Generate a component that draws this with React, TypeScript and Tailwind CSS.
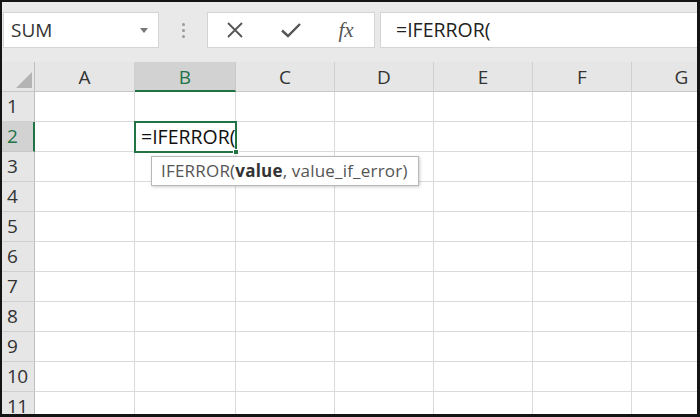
import React from "react";

const cols = [
  { l: "A", w: 100 },
  { l: "B", w: 101 },
  { l: "C", w: 99 },
  { l: "D", w: 99 },
  { l: "E", w: 99 },
  { l: "F", w: 99 },
  { l: "G", w: 100 },
];
const rows = [1, 2, 3, 4, 5, 6, 7, 8, 9, 10, 11];

export default function App() {
  return (
    <div
      className="w-[700px] h-[417px] bg-[#141414] pt-[2px] pl-[2px] pr-[3px] pb-[3px]"
      style={{ fontFamily: '"Open Sans", "Noto Sans", sans-serif' }}
    >
      <div className="relative h-full bg-white flex flex-col overflow-hidden">
        {/* toolbar */}
        <div className="h-[60px] shrink-0 bg-[#e9e9e9] flex items-start pt-[10px]">
          <div className="ml-[1px] w-[156px] h-[36px] shrink-0 bg-white border border-[#d4d4d4] flex items-center justify-between pl-[7px] pr-[10px]">
            <span className="text-[19px] text-[#333]">SUM</span>
            <svg width="8" height="5" viewBox="0 0 8 5">
              <path d="M0 0 L8 0 L4 5 Z" fill="#777" />
            </svg>
          </div>
          <div className="w-[48px] h-[36px] shrink-0 flex flex-col items-center justify-center gap-[3px]">
            <div className="w-[3px] h-[3px] rounded-full bg-[#9a9a9a]" />
            <div className="w-[3px] h-[3px] rounded-full bg-[#9a9a9a]" />
            <div className="w-[3px] h-[3px] rounded-full bg-[#9a9a9a]" />
          </div>
          <div className="w-[168px] h-[36px] shrink-0 bg-white border border-[#d4d4d4] flex items-center">
            <div className="w-[54px] flex justify-center">
              <svg width="18" height="18" viewBox="0 0 18 18">
                <path d="M2 2 L16 16 M16 2 L2 16" stroke="#555" strokeWidth="1.8" fill="none" />
              </svg>
            </div>
            <div className="w-[58px] flex justify-center">
              <svg width="22" height="18" viewBox="0 0 22 18">
                <path d="M2 9.5 L8 15 L20 3" stroke="#555" strokeWidth="2.4" fill="none" />
              </svg>
            </div>
            <div className="w-[52px] flex justify-center">
              <span
                className="text-[21px] italic text-[#555] leading-none"
                style={{ fontFamily: '"Liberation Serif", "DejaVu Serif", serif' }}
              >
                fx
              </span>
            </div>
          </div>
          <div className="ml-[5px] flex-1 h-[36px] bg-white border border-[#d4d4d4] border-r-0 flex items-center pl-[15px]">
            <span className="text-[19.5px] text-[#222]">=IFERROR(</span>
          </div>
        </div>

        {/* header row */}
        <div className="h-[30px] shrink-0 flex bg-[#e6e6e6]">
          <div className="w-[33px] h-full shrink-0 border-r border-[#bdbdbd] border-b border-b-[#c8c8c8] relative">
            <svg className="absolute right-[2px] bottom-[3px]" width="16" height="16" viewBox="0 0 16 16">
              <path d="M16 0 L16 16 L0 16 Z" fill="#b4b4b4" />
            </svg>
          </div>
          {cols.map((c) =>
            c.l === "B" ? (
              <div
                key={c.l}
                className="h-full shrink-0 bg-[#d2d2d2] border-r border-[#c8c8c8] border-b-2 border-b-[#217346] flex items-center justify-center"
                style={{ width: c.w }}
              >
                <span className="text-[19px] text-[#217346] mt-[2px]">{c.l}</span>
              </div>
            ) : (
              <div
                key={c.l}
                className="h-full shrink-0 border-r border-[#d0d0d0] border-b border-b-[#c8c8c8] flex items-center justify-center"
                style={{ width: c.w }}
              >
                <span className="text-[19px] text-[#333] mt-[1px]">{c.l}</span>
              </div>
            )
          )}
        </div>

        {/* rows */}
        {rows.map((r) => (
          <div key={r} className="h-[30px] shrink-0 flex">
            {r === 2 ? (
              <div className="w-[33px] h-full shrink-0 bg-[#d2d2d2] border-r-2 border-[#217346] border-b border-b-[#c8c8c8] flex items-center pl-[5px]">
                <span className="text-[19px] text-[#217346]">{r}</span>
              </div>
            ) : (
              <div className="w-[33px] h-full shrink-0 bg-[#e6e6e6] border-r border-[#bdbdbd] border-b border-b-[#d0d0d0] flex items-center pl-[5px]">
                <span className="text-[19px] text-[#333] tracking-[-0.5px]">{r}</span>
              </div>
            )}
            {cols.map((c) => (
              <div
                key={c.l}
                className="h-full shrink-0 border-r border-b border-[#dadada]"
                style={{ width: c.w }}
              />
            ))}
          </div>
        ))}

        {/* active cell */}
        <div className="absolute left-[132px] top-[119px] w-[103px] h-[32px] border-2 border-[#217346] flex items-center pl-[5px]">
          <span className="text-[19.5px] text-[#111] leading-none">=IFERROR(</span>
          <div className="w-[1px] h-[20px] bg-black" />
          <div className="absolute right-[-4px] bottom-[-4px] w-[6px] h-[6px] bg-[#217346] border border-white" />
        </div>

        {/* tooltip */}
        <div className="absolute left-[149px] top-[154px] h-[30px] w-[268px] bg-white border border-[#b8b8b8] shadow-[1px_1px_3px_rgba(0,0,0,0.2)] flex items-center pl-[9px]">
          <span className="text-[17px] text-[#555] tracking-[0.2px]">
            IFERROR(<b className="font-bold text-[#333]">value</b>, value_if_error)
          </span>
        </div>
      </div>
    </div>
  );
}
